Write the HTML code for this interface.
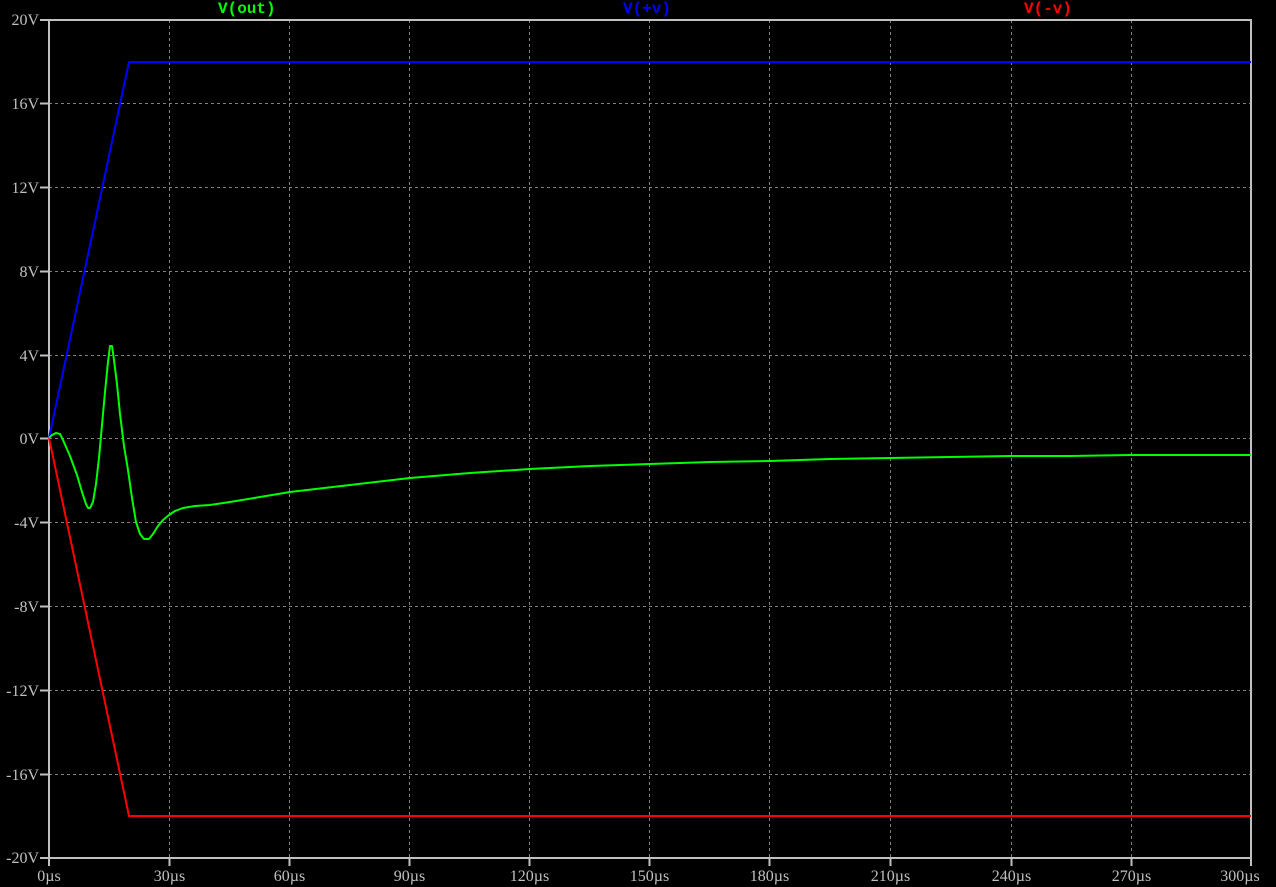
<!DOCTYPE html>
<html><head><meta charset="utf-8"><style>
html,body{margin:0;padding:0;background:#000;width:1276px;height:887px;overflow:hidden}
svg{display:block}
.ax{font-family:"Liberation Serif",serif;font-size:16px;fill:#c0c0c0}
.hd{font-family:"Liberation Mono",monospace;font-size:16px;font-weight:bold}
</style></head><body>
<svg width="1276" height="887" viewBox="0 0 1276 887" xmlns="http://www.w3.org/2000/svg">
<g stroke="#808080" stroke-width="1" stroke-dasharray="3,3" fill="none">
<path d="M49 103.5H1251M49 187.5H1251M49 271.5H1251M49 355.5H1251M49 438.5H1251M49 522.5H1251M49 606.5H1251M49 690.5H1251M49 774.5H1251"/>
<path d="M169.5 20V858M289.5 20V858M409.5 20V858M529.5 20V858M649.5 20V858M769.5 20V858M890.5 20V858M1011.5 20V858M1131.5 20V858"/>
</g>
<g stroke="#c0c0c0" stroke-width="2" fill="none">
<path d="M49 20H1251V858H49Z"/>
<path d="M40 20H49M40 103.5H49M40 187.5H49M40 271.5H49M40 355.5H49M40 438.5H49M40 522.5H49M40 606.5H49M40 690.5H49M40 774.5H49M40 858H49"/>
<path d="M49 858V866M169.5 858V866M289.5 858V866M409.5 858V866M529.5 858V866M649.5 858V866M769.5 858V866M890.5 858V866M1011.5 858V866M1131.5 858V866M1251 858V866"/>
</g>
<g class="ax" text-anchor="end">
<text x="39" y="25">20V</text><text x="39" y="109">16V</text><text x="39" y="193">12V</text><text x="39" y="277">8V</text><text x="39" y="361">4V</text><text x="39" y="444">0V</text><text x="39" y="528">-4V</text><text x="39" y="612">-8V</text><text x="39" y="696">-12V</text><text x="39" y="780">-16V</text><text x="39" y="863">-20V</text>
</g>
<g class="ax" text-anchor="middle">
<text x="49" y="881">0µs</text><text x="169.5" y="881">30µs</text><text x="289.5" y="881">60µs</text><text x="409.5" y="881">90µs</text><text x="529.5" y="881">120µs</text><text x="649.5" y="881">150µs</text><text x="769.5" y="881">180µs</text><text x="890.5" y="881">210µs</text><text x="1011.5" y="881">240µs</text><text x="1131.5" y="881">270µs</text><text x="1240" y="881">300µs</text>
</g>
<text class="hd" x="218" y="13" fill="#00ff00">V(out)</text>
<text class="hd" x="623" y="13" fill="#0000ff">V(+v)</text>
<text class="hd" x="1024" y="13" fill="#ff0000">V(-v)</text>
<g fill="none" stroke-width="2" stroke-linejoin="round">
<path stroke="#0000ff" d="M49 438L129 62H1251"/>
<path stroke="#ff0000" d="M49 438L129 816H1251"/>
<path stroke="#00ff00" d="M49 438L52 435L56 433L60 434L63 440L70 456L77 475L82 492L86 504L88 508L90 508L93 502L96 484L99 458L102 425L105 392L108 362L110 346L112 346L114 360L117 384L120 414L124 446L128 470L132 498L136 522L140 534L144 539L149 539L153 534L158 526L163 520L169 515L175 511L183 508L195 506L210 505L230 502L260 497L290 492L350 485L410 478L470 473L530 469L590 466L650 464L710 462L770 461L830 459L890 458L950 457L1010 456L1070 456L1130 455L1251 455"/>
</g>
</svg>
</body></html>
